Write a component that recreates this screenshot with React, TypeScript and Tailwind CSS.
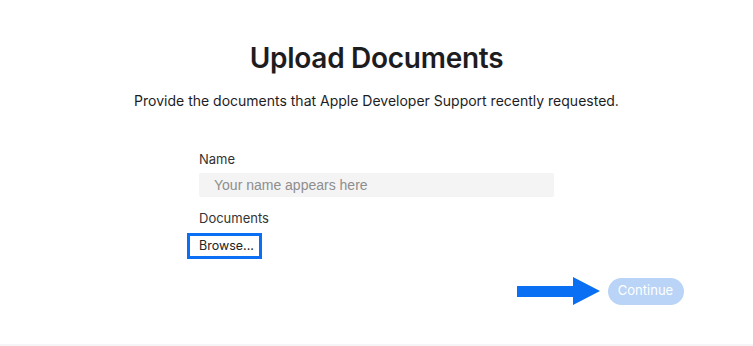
export default function App() {
  return (
    <div className="flex h-[346px] w-full flex-col bg-white font-['Inter',sans-serif] text-[#1d1d1f]">
      <main className="flex flex-1 flex-col items-center">
        {/* ── Heading ─────────────────────────────────────────── */}
        <h1 className="pt-[41px] text-[28px] font-semibold leading-[34px] tracking-[-0.01em]">
          Upload Documents
        </h1>
        <p className="mt-[16px] text-[14px] leading-[20px]">
          Provide the documents that Apple Developer Support recently requested.
        </p>

        {/* ── Form ────────────────────────────────────────────── */}
        <div className="mt-[40px] flex w-[355px] flex-col">
          <label className="text-[13px] leading-[16px] text-[#333]">Name</label>
          <div className="mt-[6px] flex h-[24px] items-center rounded-[2px] bg-[#f4f4f4] pl-[15px] font-['Liberation_Sans',Arial,sans-serif] text-[14px] text-[#8e8e8e]">
            Your name appears here
          </div>

          <label className="mt-[13px] text-[13px] leading-[16px] text-[#333]">Documents</label>
          <div className="ml-[-12px] mt-[7px] flex h-[26px] w-[75px] items-center border-[3px] border-[#0a6ff2] pl-[9px] text-[12.5px] leading-[16px] text-[#222]">
            Browse...
          </div>
        </div>

        <div className="mt-[18px] flex w-[614px] items-center justify-end gap-[8px]">
          <Arrow />
          <button className="h-[27px] w-[76px] rounded-full bg-[#b9d4f6] text-[13px] text-white">
            Continue
          </button>
        </div>
      </main>
      <div className="h-[2px] bg-[#f5f5f7]" />
    </div>
  );
}

function Arrow() {
  return (
    <svg width="83" height="28" viewBox="0 0 83 28" aria-hidden>
      <path d="M0 9 H56 V0 L83 14 L56 28 V20 H0 Z" fill="#0a6ff2" />
    </svg>
  );
}
